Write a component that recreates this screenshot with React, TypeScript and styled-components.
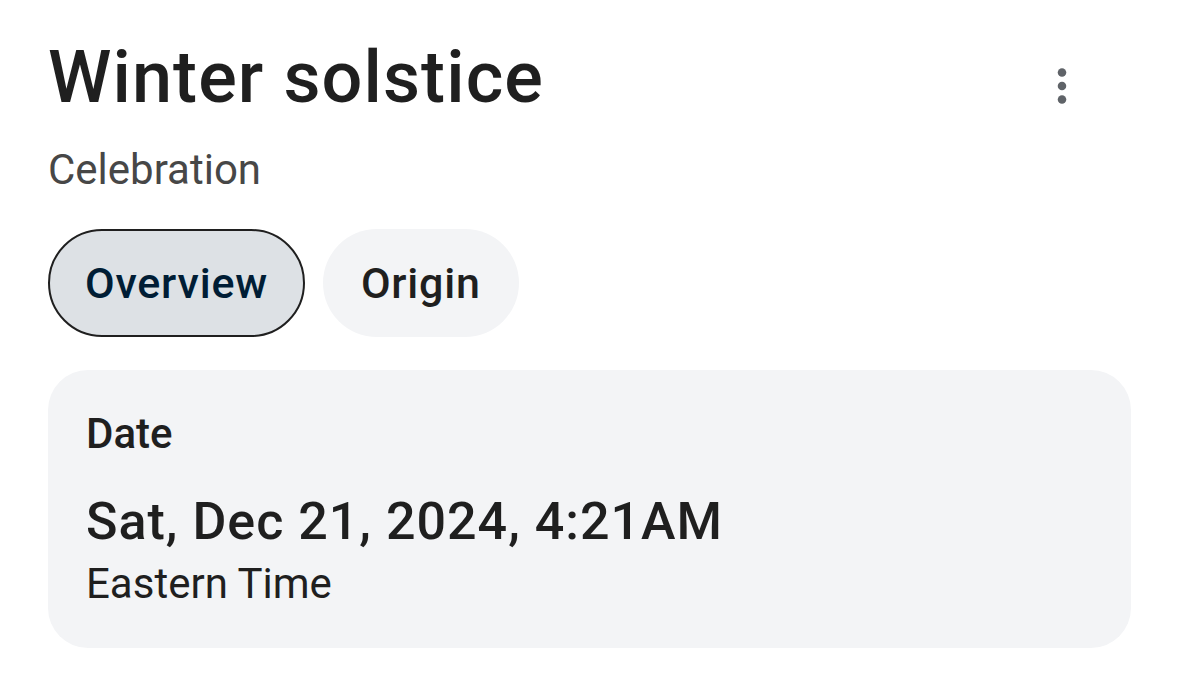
import React from "react";
import styled, { createGlobalStyle } from "styled-components";

const Global = createGlobalStyle`
  html, body {
    margin: 0;
    padding: 0;
    background: #ffffff;
  }
  body {
    font-family: Roboto, "Noto Sans", "Liberation Sans", sans-serif;
    color: #1f1f1f;
  }
  * { box-sizing: border-box; }
`;

const Page = styled.div`
  padding: 36px 48px 0 48px;
  display: flex;
  flex-direction: column;
`;

const Header = styled.div`
  display: flex;
  align-items: flex-start;
  justify-content: space-between;
`;

const Title = styled.h1`
  margin: 0;
  font-size: 72px;
  font-weight: 500;
  line-height: 84px;
  letter-spacing: 1.1px;
  color: #1f1f1f;
`;

const MoreBtn = styled.button`
  width: 54px;
  height: 54px;
  margin: 23px 42px 0 0;
  border: none;
  background: transparent;
  display: flex;
  align-items: center;
  justify-content: center;
  padding: 0;
  cursor: pointer;
`;

const Subtitle = styled.div`
  margin-top: 25px;
  font-size: 42px;
  line-height: 50px;
  color: #474747;
`;

const Tabs = styled.div`
  display: flex;
  gap: 18px;
  margin-top: 34px;
`;

const Tab = styled.button<{ $active?: boolean }>`
  height: 108px;
  padding: 0 ${(p) => (p.$active ? 35 : 38)}px;
  border-radius: 54px;
  border: ${(p) => (p.$active ? "2.5px solid #1f1f1f" : "none")};
  background: ${(p) => (p.$active ? "#dde1e5" : "#f3f4f6")};
  color: ${(p) => (p.$active ? "#001d35" : "#1f1f1f")};
  font-family: Roboto, "Noto Sans", sans-serif;
  font-size: 43px;
  font-weight: 500;
  letter-spacing: 0.8px;
  cursor: pointer;
`;

const Card = styled.div`
  margin-top: 33px;
  background: #f3f4f6;
  border-radius: 40px;
  padding: 39px 38px 39px 38px;
  display: flex;
  flex-direction: column;
`;

const Label = styled.div`
  font-size: 42px;
  font-weight: 500;
  line-height: 50px;
  color: #1f1f1f;
`;

const Value = styled.div`
  margin-top: 32px;
  font-size: 52px;
  font-weight: 500;
  line-height: 62px;
  letter-spacing: 1px;
  color: #1f1f1f;
`;

const Note = styled.div`
  margin-top: 6px;
  font-size: 42px;
  line-height: 50px;
  color: #1f1f1f;
`;

const MoreIcon = () => (
  <svg width="54" height="54" viewBox="0 0 24 24">
    <circle cx="12" cy="6" r="1.9" fill="#5f6368" />
    <circle cx="12" cy="12" r="1.9" fill="#5f6368" />
    <circle cx="12" cy="18" r="1.9" fill="#5f6368" />
  </svg>
);

export default function App() {
  return (
    <>
      <Global />
      <Page>
        <Header>
          <Title>Winter solstice</Title>
          <MoreBtn aria-label="More options">
            <MoreIcon />
          </MoreBtn>
        </Header>
        <Subtitle>Celebration</Subtitle>
        <Tabs>
          <Tab $active>Overview</Tab>
          <Tab>Origin</Tab>
        </Tabs>
        <Card>
          <Label>Date</Label>
          <Value>Sat, Dec 21, 2024, 4:21AM</Value>
          <Note>Eastern Time</Note>
        </Card>
      </Page>
    </>
  );
}
